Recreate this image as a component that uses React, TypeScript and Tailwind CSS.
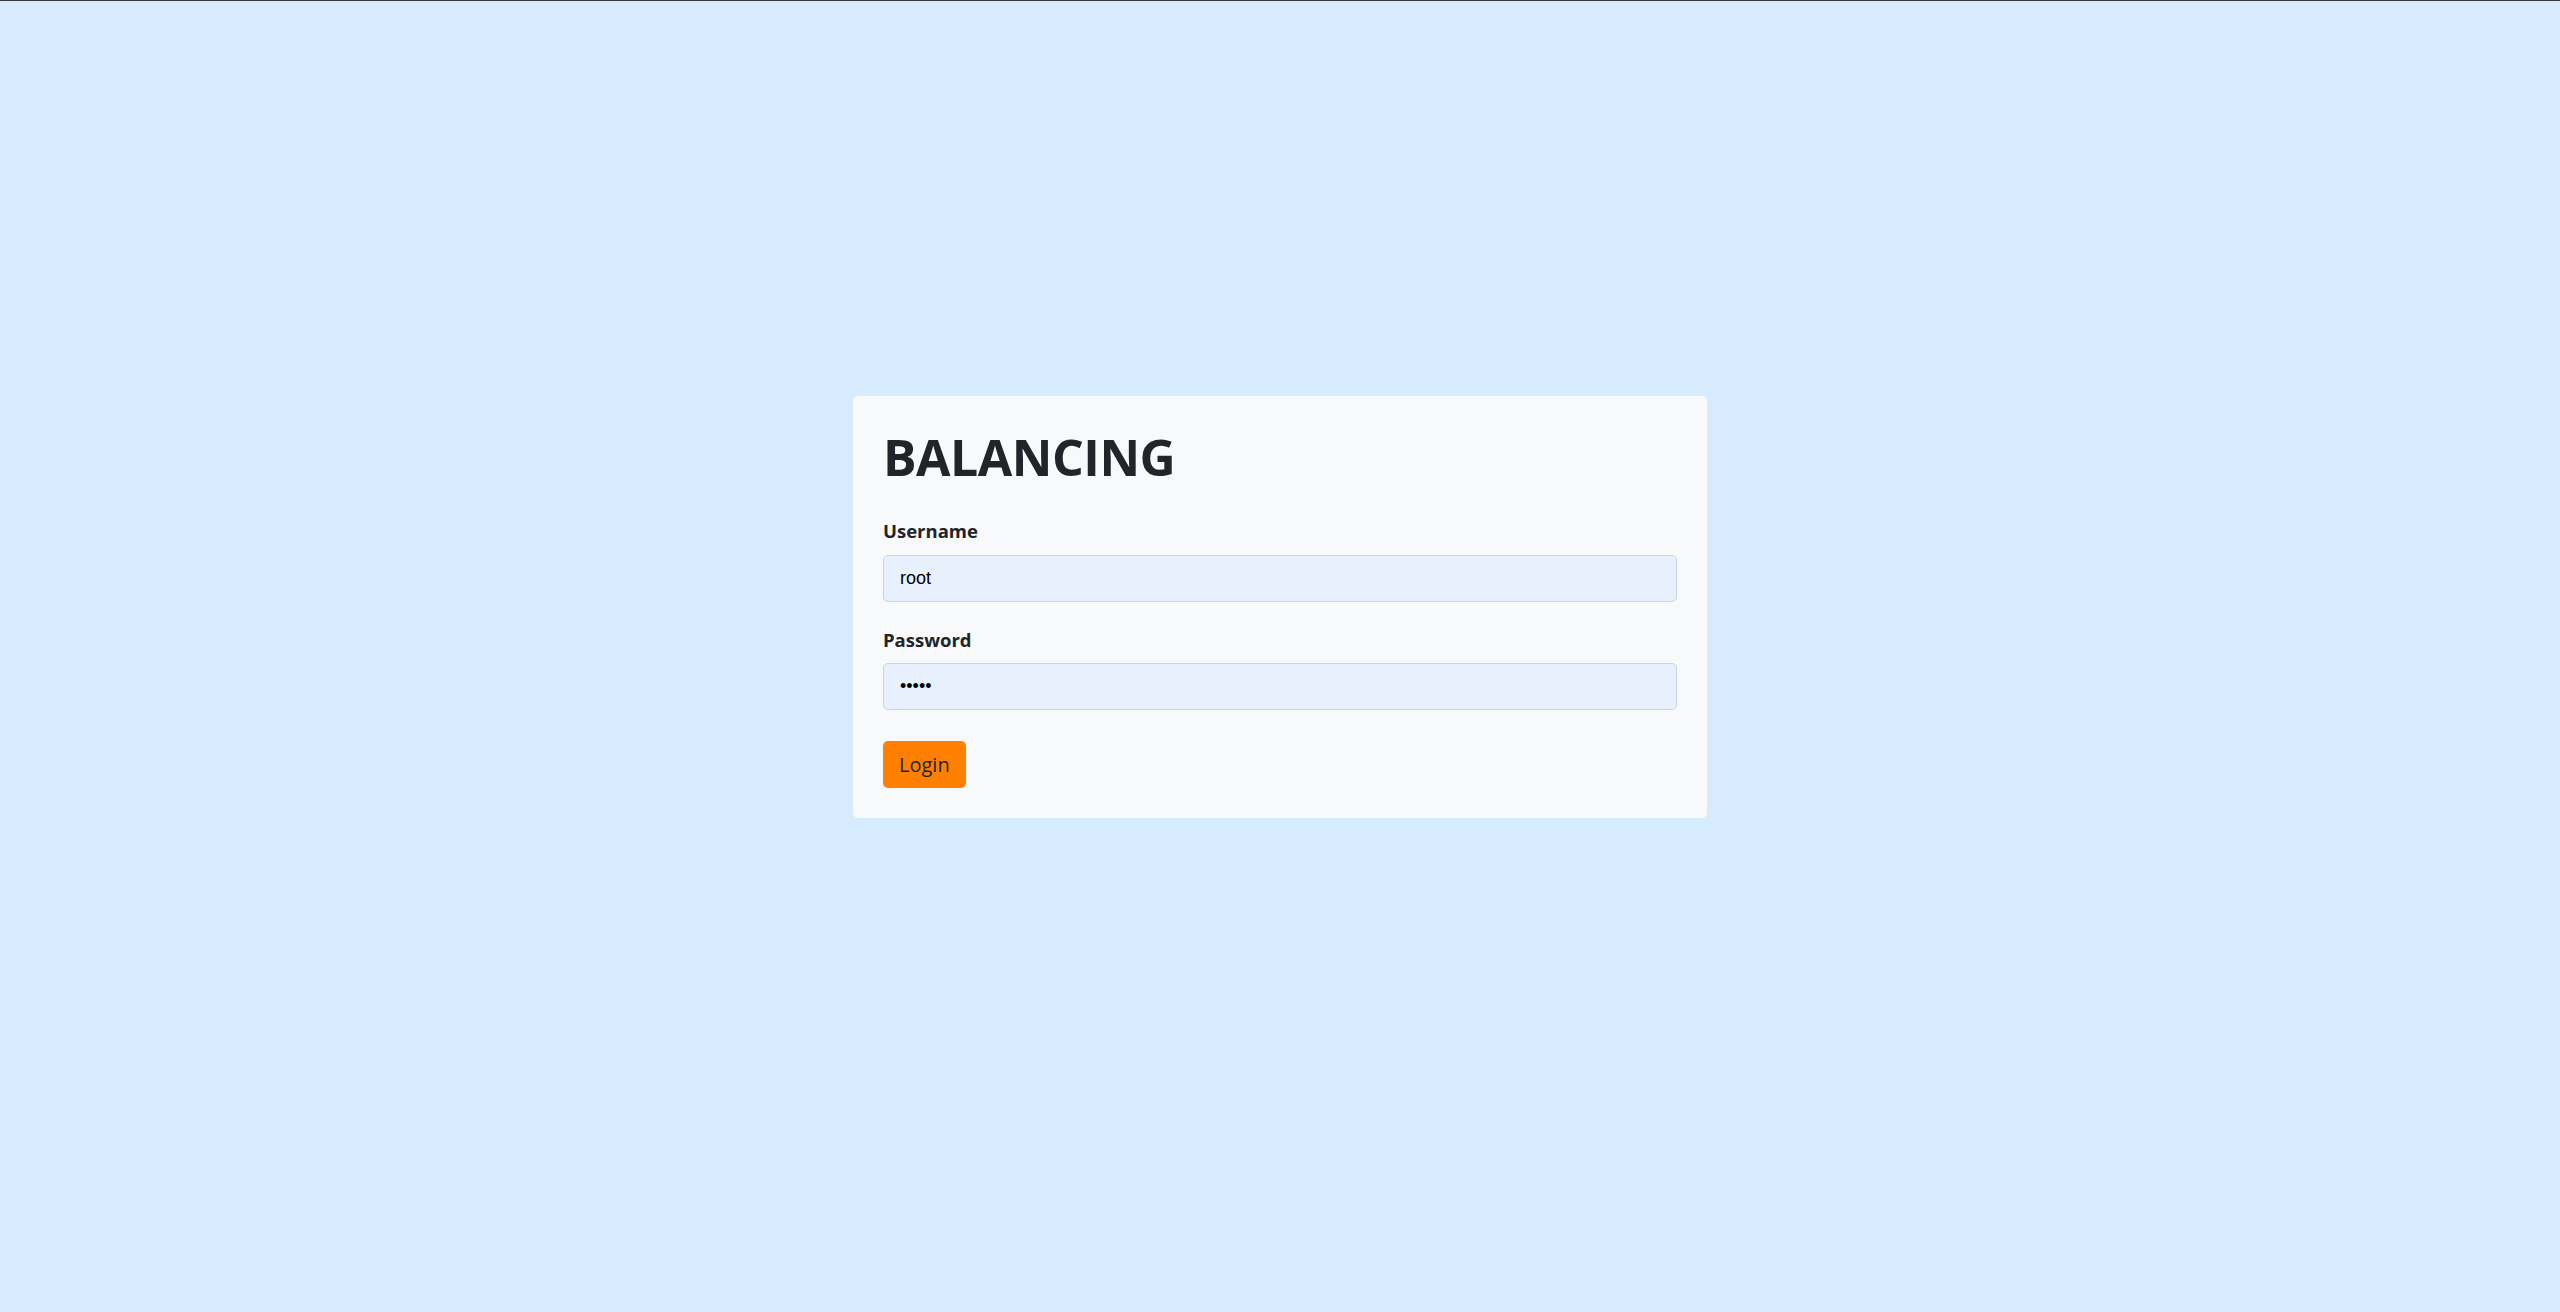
export default function App() {
  return (
    <div className="min-h-screen border-t border-[#3a3a3a] bg-[#d6ebfe] pt-[395px]">
      <div className="mx-auto w-[854px] rounded-[5px] bg-[#f8f9fa] px-[30px] pt-[31px] pb-[30px]">
        <h1 className="text-[50px] font-bold leading-[1.2] text-[#212529] [font-family:'Open_Sans',sans-serif] tracking-[-0.5px]">
          BALANCING
        </h1>
        <form className="mt-[29px]" onSubmit={(e) => e.preventDefault()}>
          <label className="block text-[18.5px] font-bold leading-[30px] text-[#212529] [font-family:'Open_Sans',sans-serif]">
            Username
          </label>
          <input
            type="text"
            defaultValue="root"
            className="mt-[9px] block h-[47px] w-full rounded-[5px] border border-[#ced4da] bg-[#e8f0fe] px-[16px] text-[18px] text-black outline-none [font-family:'Liberation_Sans',Arial,sans-serif]"
          />
          <label className="mt-[23px] block text-[18.5px] font-bold leading-[30px] text-[#212529] [font-family:'Open_Sans',sans-serif]">
            Password
          </label>
          <input
            type="password"
            defaultValue="admin"
            className="mt-[8px] block h-[47px] w-full rounded-[5px] border border-[#ced4da] bg-[#e8f0fe] px-[16px] text-[18px] text-black outline-none [font-family:'Liberation_Sans',Arial,sans-serif]"
          />
          <button
            type="submit"
            className="mt-[31px] h-[47px] rounded-[5px] bg-[#ff8000] px-[16px] text-[20px] text-[#212529] [font-family:'Open_Sans',sans-serif]"
          >
            Login
          </button>
        </form>
      </div>
    </div>
  );
}
